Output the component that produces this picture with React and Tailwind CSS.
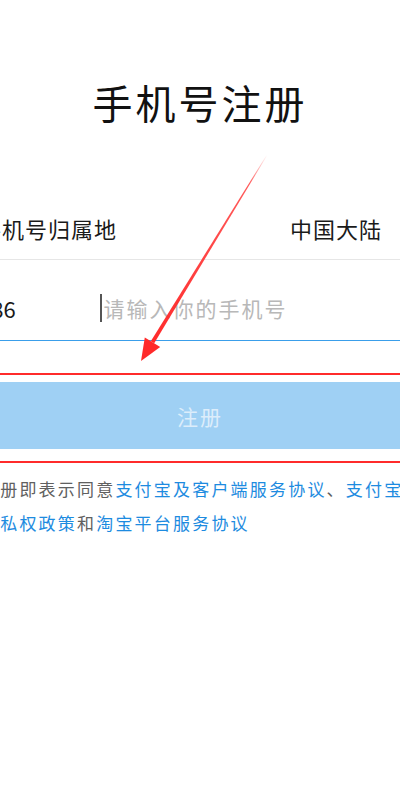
export default function App() {
  const cjk = { fontFamily: '"Noto Sans CJK SC", "Noto Sans", sans-serif' };
  return (
    <div className="relative w-[400px] h-[786px] overflow-hidden bg-white" style={cjk}>
      <div className="flex flex-col">
        <div className="pt-[82px] text-center text-[40px] leading-[40px] tracking-[3px] text-[#111]">
          手机号注册
        </div>

        <div className="mt-[74px] ml-[-21px] h-[64px] flex items-center justify-between pr-[18px] border-b border-[#e6e6e6] text-[22px] leading-[22px] tracking-[1px] text-[#1a1a1a]">
          <span>手机号归属地</span>
          <span>中国大陆</span>
        </div>

        <div className="ml-[-21px] h-[81px] pt-[16px] flex items-center border-b border-[#3a9eea]">
          <span className="w-[121px] text-[22px] leading-[22px] text-[#1a1a1a]">+86</span>
          <span className="w-[1.5px] h-[28px] bg-[#555]" />
          <span className="ml-[2px] text-[21px] leading-[22px] tracking-[2px] text-[#b8b8b8]">请输入你的手机号</span>
        </div>

        <div className="mt-[41px] h-[67px] bg-[#9fd0f4] flex items-center justify-center text-[21px] leading-[22px] tracking-[2px] text-[#dcedfb]">
          注册
        </div>

        <div className="mt-[23px] ml-[-19px] text-[17px] leading-[34px] tracking-[2.2px] whitespace-nowrap text-[#606060]">
          <div>
            注册即表示同意<span className="text-[#1d8be0]">支付宝及客户端服务协议</span>、<span className="text-[#1d8be0]">支付宝</span>
          </div>
          <div>
            <span className="text-[#1d8be0]">隐私权政策</span>和<span className="text-[#1d8be0]">淘宝平台服务协议</span>
          </div>
        </div>
      </div>

      {/* annotation: red lines */}
      <div className="absolute left-0 top-[373px] w-[400px] h-[2px] bg-[#ff2b2b]" />
      <div className="absolute left-0 top-[461px] w-[400px] h-[2px] bg-[#ff2b2b]" />

      {/* annotation: arrow */}
      <svg className="absolute left-0 top-0" width="400" height="786" viewBox="0 0 400 786">
        <defs>
          <linearGradient id="ag" x1="267" y1="155" x2="150" y2="345" gradientUnits="userSpaceOnUse">
            <stop offset="0" stopColor="#ff3030" stopOpacity="0" />
            <stop offset="0.15" stopColor="#ff3030" stopOpacity="0.8" />
            <stop offset="1" stopColor="#ff2a2a" stopOpacity="1" />
          </linearGradient>
        </defs>
        <polygon points="267.3,155.2 266.7,154.8 150.8,341.2 154.2,343.2" fill="url(#ag)" />
        <polygon points="141,361 160.2,346.9 144.8,337.5" fill="#ff2a2a" />
      </svg>
    </div>
  );
}
